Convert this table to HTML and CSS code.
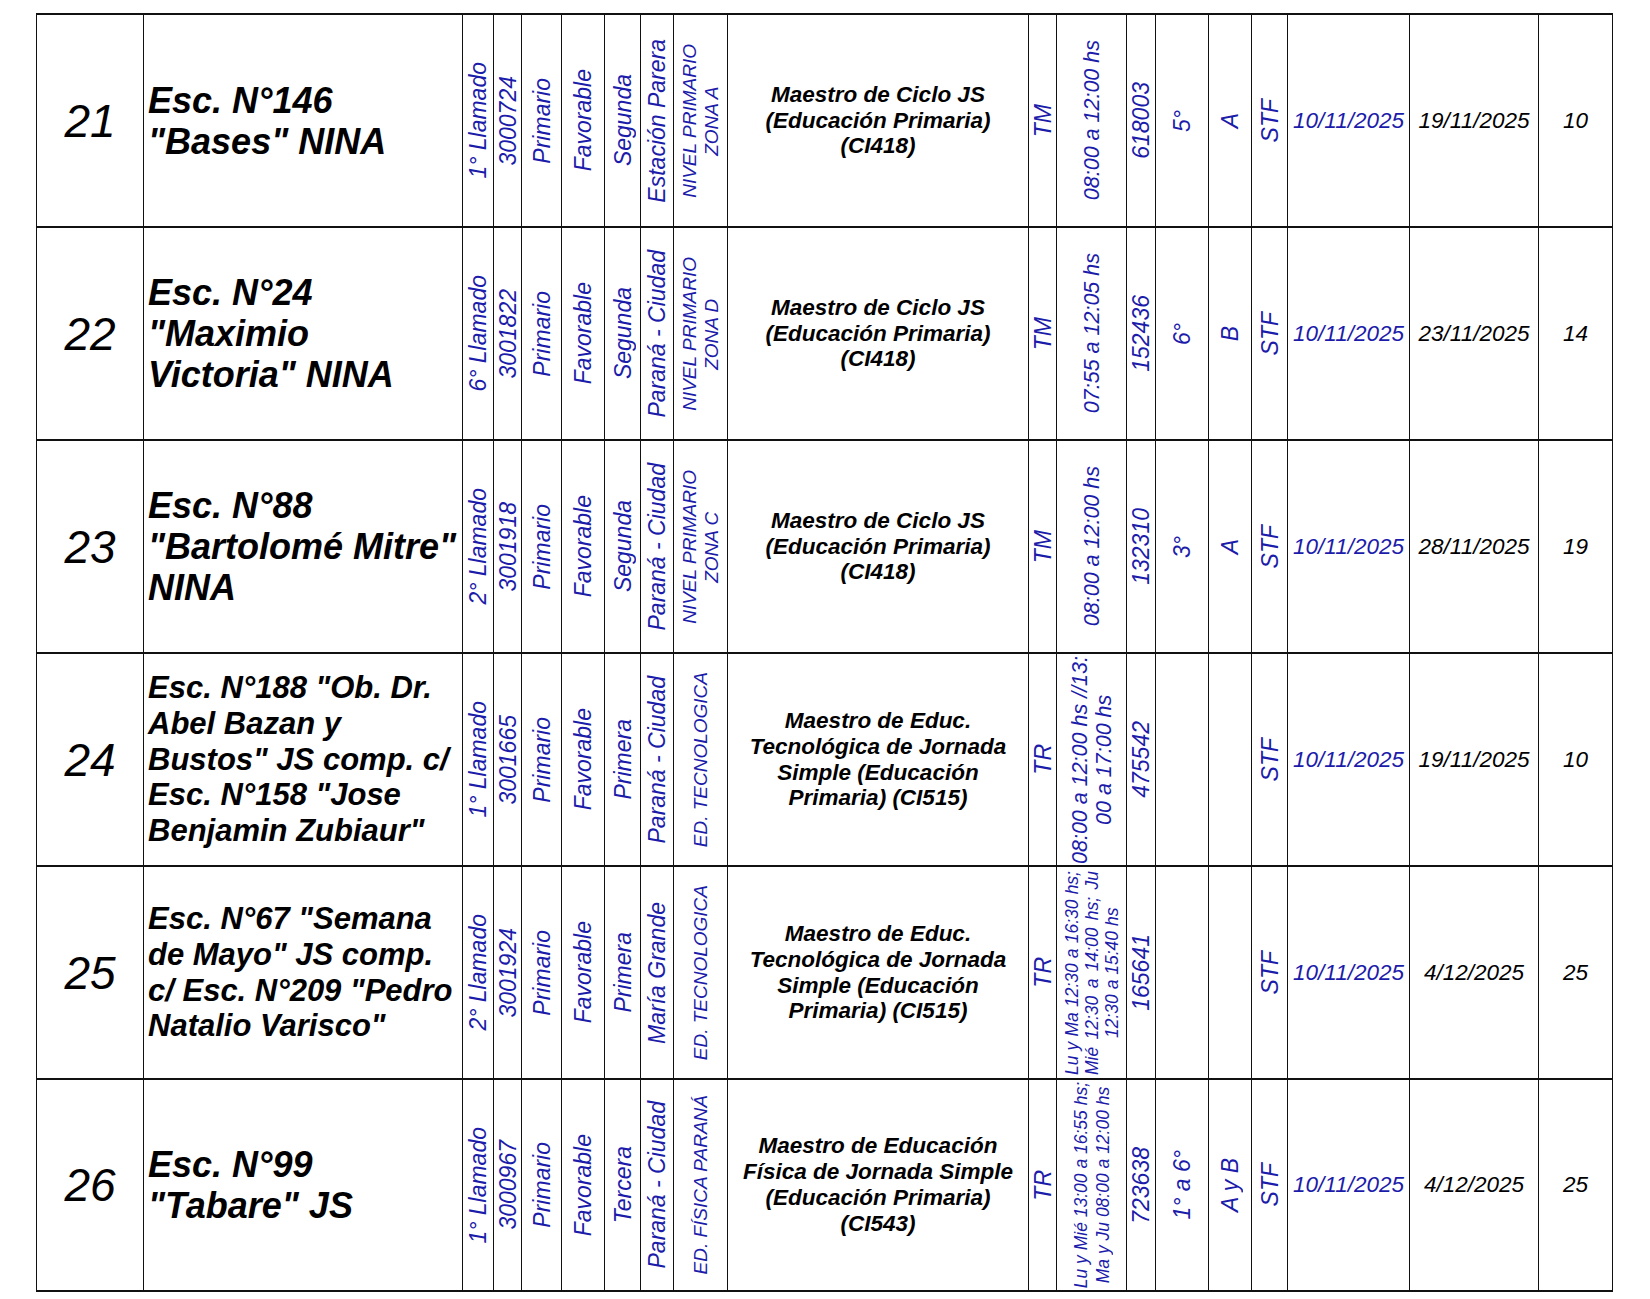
FILE: index.html
```html
<!DOCTYPE html>
<html lang="es">
<head>
<meta charset="utf-8">
<title>Listado</title>
<link rel="stylesheet" href="styles.css">
</head>
<body>
<div class="sheet">
  <!-- Row 21 -->
  <div class="c num">21</div>
  <div class="c name"><p class="nm">Esc. N°146<br>"Bases" NINA</p></div>
  <div class="c"><span class="v">1° Llamado</span></div>
  <div class="c"><span class="v">3000724</span></div>
  <div class="c"><span class="v">Primario</span></div>
  <div class="c"><span class="v">Favorable</span></div>
  <div class="c"><span class="v">Segunda</span></div>
  <div class="c"><span class="v">Estación Parera</span></div>
  <div class="c"><span class="v sm">NIVEL PRIMARIO<br>ZONA A</span></div>
  <div class="c"><p class="cargo">Maestro de Ciclo JS<br>(Educación Primaria)<br>(CI418)</p></div>
  <div class="c"><span class="v">TM</span></div>
  <div class="c"><span class="v hr">08:00 a 12:00 hs</span></div>
  <div class="c"><span class="v">618003</span></div>
  <div class="c"><span class="v">5°</span></div>
  <div class="c"><span class="v">A</span></div>
  <div class="c"><span class="v">STF</span></div>
  <div class="c"><span class="d blue">10/11/2025</span></div>
  <div class="c"><span class="d">19/11/2025</span></div>
  <div class="c"><span class="d">10</span></div>

  <!-- Row 22 -->
  <div class="c num">22</div>
  <div class="c name"><p class="nm">Esc. N°24<br>"Maximio<br>Victoria" NINA</p></div>
  <div class="c"><span class="v">6° Llamado</span></div>
  <div class="c"><span class="v">3001822</span></div>
  <div class="c"><span class="v">Primario</span></div>
  <div class="c"><span class="v">Favorable</span></div>
  <div class="c"><span class="v">Segunda</span></div>
  <div class="c"><span class="v">Paraná - Ciudad</span></div>
  <div class="c"><span class="v sm">NIVEL PRIMARIO<br>ZONA D</span></div>
  <div class="c"><p class="cargo">Maestro de Ciclo JS<br>(Educación Primaria)<br>(CI418)</p></div>
  <div class="c"><span class="v">TM</span></div>
  <div class="c"><span class="v hr">07:55 a 12:05 hs</span></div>
  <div class="c"><span class="v">152436</span></div>
  <div class="c"><span class="v">6°</span></div>
  <div class="c"><span class="v">B</span></div>
  <div class="c"><span class="v">STF</span></div>
  <div class="c"><span class="d blue">10/11/2025</span></div>
  <div class="c"><span class="d">23/11/2025</span></div>
  <div class="c"><span class="d">14</span></div>

  <!-- Row 23 -->
  <div class="c num">23</div>
  <div class="c name"><p class="nm">Esc. N°88<br>"Bartolomé Mitre"<br>NINA</p></div>
  <div class="c"><span class="v">2° Llamado</span></div>
  <div class="c"><span class="v">3001918</span></div>
  <div class="c"><span class="v">Primario</span></div>
  <div class="c"><span class="v">Favorable</span></div>
  <div class="c"><span class="v">Segunda</span></div>
  <div class="c"><span class="v">Paraná - Ciudad</span></div>
  <div class="c"><span class="v sm">NIVEL PRIMARIO<br>ZONA C</span></div>
  <div class="c"><p class="cargo">Maestro de Ciclo JS<br>(Educación Primaria)<br>(CI418)</p></div>
  <div class="c"><span class="v">TM</span></div>
  <div class="c"><span class="v hr">08:00 a 12:00 hs</span></div>
  <div class="c"><span class="v">132310</span></div>
  <div class="c"><span class="v">3°</span></div>
  <div class="c"><span class="v">A</span></div>
  <div class="c"><span class="v">STF</span></div>
  <div class="c"><span class="d blue">10/11/2025</span></div>
  <div class="c"><span class="d">28/11/2025</span></div>
  <div class="c"><span class="d">19</span></div>

  <!-- Row 24 -->
  <div class="c num">24</div>
  <div class="c name"><p class="nm long">Esc. N°188 "Ob. Dr.<br>Abel Bazan y<br>Bustos" JS comp. c/<br>Esc. N°158 "Jose<br>Benjamin Zubiaur"</p></div>
  <div class="c"><span class="v">1° Llamado</span></div>
  <div class="c"><span class="v">3001665</span></div>
  <div class="c"><span class="v">Primario</span></div>
  <div class="c"><span class="v">Favorable</span></div>
  <div class="c"><span class="v">Primera</span></div>
  <div class="c"><span class="v">Paraná - Ciudad</span></div>
  <div class="c"><span class="v sm">ED. TECNOLOGICA</span></div>
  <div class="c"><p class="cargo">Maestro de Educ.<br>Tecnológica de Jornada<br>Simple (Educación<br>Primaria) (CI515)</p></div>
  <div class="c"><span class="v">TR</span></div>
  <div class="c"><span class="v hr">08:00 a 12:00 hs //13:<br>00 a 17:00 hs</span></div>
  <div class="c"><span class="v">475542</span></div>
  <div class="c"></div>
  <div class="c"></div>
  <div class="c"><span class="v">STF</span></div>
  <div class="c"><span class="d blue">10/11/2025</span></div>
  <div class="c"><span class="d">19/11/2025</span></div>
  <div class="c"><span class="d">10</span></div>

  <!-- Row 25 -->
  <div class="c num">25</div>
  <div class="c name"><p class="nm long">Esc. N°67 "Semana<br>de Mayo" JS comp.<br>c/ Esc. N°209 "Pedro<br>Natalio Varisco"</p></div>
  <div class="c"><span class="v">2° Llamado</span></div>
  <div class="c"><span class="v">3001924</span></div>
  <div class="c"><span class="v">Primario</span></div>
  <div class="c"><span class="v">Favorable</span></div>
  <div class="c"><span class="v">Primera</span></div>
  <div class="c"><span class="v">María Grande</span></div>
  <div class="c"><span class="v sm">ED. TECNOLOGICA</span></div>
  <div class="c"><p class="cargo">Maestro de Educ.<br>Tecnológica de Jornada<br>Simple (Educación<br>Primaria) (CI515)</p></div>
  <div class="c"><span class="v">TR</span></div>
  <div class="c"><span class="v xs"><span class="jl">Lu y Ma 12:30 a 16:30 hs;</span><span class="jl">Mié 12:30 a 14:00 hs; Ju</span><span class="cl">12:30 a 15:40 hs</span></span></div>
  <div class="c"><span class="v">165641</span></div>
  <div class="c"></div>
  <div class="c"></div>
  <div class="c"><span class="v">STF</span></div>
  <div class="c"><span class="d blue">10/11/2025</span></div>
  <div class="c"><span class="d">4/12/2025</span></div>
  <div class="c"><span class="d">25</span></div>

  <!-- Row 26 -->
  <div class="c num">26</div>
  <div class="c name"><p class="nm">Esc. N°99<br>"Tabare" JS</p></div>
  <div class="c"><span class="v">1° Llamado</span></div>
  <div class="c"><span class="v">3000967</span></div>
  <div class="c"><span class="v">Primario</span></div>
  <div class="c"><span class="v">Favorable</span></div>
  <div class="c"><span class="v">Tercera</span></div>
  <div class="c"><span class="v">Paraná - Ciudad</span></div>
  <div class="c"><span class="v sm">ED. FÍSICA PARANÁ</span></div>
  <div class="c"><p class="cargo">Maestro de Educación<br>Física de Jornada Simple<br>(Educación Primaria)<br>(CI543)</p></div>
  <div class="c"><span class="v">TR</span></div>
  <div class="c"><span class="v xs2">Lu y Mié 13:00 a 16:55 hs;<br>Ma y Ju 08:00 a 12:00 hs</span></div>
  <div class="c"><span class="v">723638</span></div>
  <div class="c"><span class="v">1° a 6°</span></div>
  <div class="c"><span class="v">A y B</span></div>
  <div class="c"><span class="v">STF</span></div>
  <div class="c"><span class="d blue">10/11/2025</span></div>
  <div class="c"><span class="d">4/12/2025</span></div>
  <div class="c"><span class="d">25</span></div>
</div>
</body>
</html>
```

FILE: styles.css
```css
html, body {
  margin: 0;
  padding: 0;
  background: #ffffff;
}

body {
  font-family: "Liberation Sans", Arial, sans-serif;
  font-style: italic;
  color: #000;
}

.sheet {
  display: grid;
  grid-template-columns: 106px 318px 30px 27px 39px 42px 35px 32px 53px 300px 27px 69px 28px 52px 42px 35px 121px 128px 73px;
  grid-template-rows: repeat(5, 211px) 210px;
  gap: 2px 1px;
  padding: 2px 1px;
  background: #111;
  width: max-content;
  margin: 13px 0 0 36px;
}

.c {
  background: #fff;
  display: flex;
  align-items: center;
  justify-content: center;
  overflow: visible;
  min-width: 0;
}

.num {
  font-size: 46px;
}

.name {
  justify-content: flex-start;
  padding-left: 4px;
}

.nm {
  margin: 0;
  font-weight: bold;
  font-size: 36px;
  line-height: 41px;
  white-space: nowrap;
}

.nm.long {
  font-size: 31px;
  line-height: 35.8px;
}

.v {
  writing-mode: vertical-rl;
  transform: rotate(180deg);
  white-space: pre;
  text-align: center;
  color: #1c1caa;
  font-size: 23px;
  line-height: 26px;
}

.v.sm {
  font-size: 19px;
  line-height: 22px;
}

.v.hr {
  font-size: 21.5px;
  line-height: 24px;
}

.v.xs {
  font-size: 17.5px;
  line-height: 20px;
  inline-size: 204px;
  white-space: normal;
}

.jl {
  display: block;
  white-space: nowrap;
  text-align: justify;
  text-align-last: justify;
}

.cl {
  display: block;
  white-space: nowrap;
  text-align: center;
}

.v.xs2 {
  font-size: 17.5px;
  line-height: 22px;
}

.cargo {
  margin: 0;
  text-align: center;
  font-weight: bold;
  font-size: 22.5px;
  line-height: 25.8px;
  white-space: nowrap;
}

.d {
  font-size: 22.5px;
}

.blue {
  color: #1c1caa;
}
```
